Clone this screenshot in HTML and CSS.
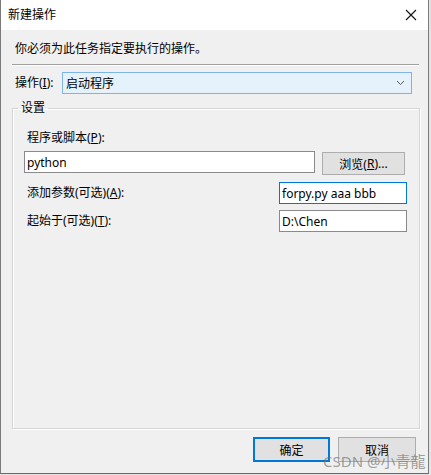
FILE: index.html
```html
<!DOCTYPE html>
<html lang="zh-CN">
<head>
<meta charset="utf-8">
<title>新建操作</title>
<link rel="stylesheet" href="styles.css">
</head>
<body>
<div class="window">
  <div class="titlebar">
    <span class="title">新建操作</span>
    <svg class="close" width="12" height="12" viewBox="0 0 12 12"><path d="M1 1 L11 11 M11 1 L1 11" stroke="#111" stroke-width="1.1" fill="none"/></svg>
  </div>
  <div class="main">
    <div class="prompt">你必须为此任务指定要执行的操作。</div>
    <div class="sep"></div>
    <div class="action-row">
      <span class="action-label">操作(<u>I</u>):</span>
      <div class="combo">
        <span>启动程序</span>
        <svg class="chevron" width="9" height="6" viewBox="0 0 9 6"><path d="M1 1 L4.5 4.5 L8 1" stroke="#555" stroke-width="1" fill="none"/></svg>
      </div>
    </div>
    <fieldset class="group">
      <legend>设置</legend>
      <div class="group-inner">
        <div class="field-label">程序或脚本(<u>P</u>):</div>
        <div class="program-row">
          <div class="input program">python</div>
          <div class="btn browse">浏览(<u>R</u>)...</div>
        </div>
        <div class="opt-row">
          <span class="opt-label">添加参数(可选)(<u>A</u>):</span>
          <div class="input short focused">forpy.py aaa bbb</div>
        </div>
        <div class="opt-row second">
          <span class="opt-label">起始于(可选)(<u>T</u>):</span>
          <div class="input short">D:\Chen</div>
        </div>
      </div>
    </fieldset>
    <div class="footer">
      <div class="btn default">确定</div>
      <div class="btn cancel">取消</div>
    </div>
  </div>
  <div class="watermark">CSDN @小青龍</div>
</div>
</body>
</html>
```

FILE: styles.css
```css
* { box-sizing: border-box; }
html, body { margin: 0; padding: 0; }
body {
  background: #e4e4e4;
  font-family: "Noto Sans", "Noto Sans CJK SC", sans-serif;
  font-size: 12px;
  color: #000;
  width: 431px;
  height: 475px;
  overflow: hidden;
}
.window {
  position: relative;
  width: 429px;
  height: 474px;
  border-left: 1px solid #7a7a7a;
  border-right: 1px solid #7a7a7a;
  border-bottom: 1px solid #6a6a6a;
  background: #f0f0f0;
  display: flex;
  flex-direction: column;
}
.titlebar {
  height: 30px;
  background: #fff;
  display: flex;
  align-items: center;
  justify-content: space-between;
  padding: 0 11px 0 7px;
}
.title { line-height: 16px; }
.close { display: block; }
.main {
  flex: 1;
  display: flex;
  flex-direction: column;
  padding: 11px 8px 0 11px;
}
.prompt { margin-left: 3px; line-height: 16px; }
.sep {
  margin-top: 7px;
  margin-right: 1px;
  height: 2px;
  border-top: 1px solid #a0a0a0;
  border-bottom: 1px solid #fff;
}
.action-row {
  margin-top: 6px;
  display: flex;
  align-items: center;
  height: 22px;
}
.action-label { width: 47px; margin-left: 3px; line-height: 16px; }
.combo {
  flex: 1;
  margin-right: 8px;
  height: 22px;
  background: #e5f1fb;
  border: 1px solid #7eb4ea;
  display: flex;
  align-items: center;
  justify-content: space-between;
  padding: 0 6px 0 3px;
}
.chevron { display: block; }
.group {
  flex: 1;
  margin: 6px 0 0 0;
  padding: 0;
  min-width: 0;
  border: 1px solid #d5d5d5;
  box-shadow: inset 1px 1px 0 #fff, 1px 1px 0 #fff;
}
.group legend {
  margin-left: 5px;
  padding: 0 3px;
  line-height: 16px;
}
.group-inner { padding: 14px 12px 0 11px; }
.field-label { margin-left: 3px; line-height: 16px; }
.program-row {
  margin-top: 5px;
  display: flex;
  align-items: flex-start;
}
.input {
  height: 22px;
  background: #fff;
  border: 1px solid #8a8a8a;
  padding: 0 2px;
  display: flex;
  align-items: center;
  white-space: nowrap;
  overflow: hidden;
}
.input.program { width: 291px; }
.input.short { width: 128px; }
.input.focused { border-color: #0078d7; }
.btn {
  height: 23px;
  background: #e1e1e1;
  border: 1px solid #adadad;
  display: flex;
  align-items: center;
  justify-content: center;
  white-space: nowrap;
}
.browse { width: 83px; margin-left: 7px; margin-top: 1px; }
.opt-row {
  margin-top: 7px;
  display: flex;
  align-items: center;
}
.opt-row.second { margin-top: 6px; }
.opt-label { flex: 1; margin-left: 3px; line-height: 16px; }
.footer {
  height: 44px;
  padding: 8px 4px 0 0;
  display: flex;
  justify-content: flex-end;
  align-items: flex-start;
  gap: 8px;
}
.footer .btn { height: 25px; }
.default { width: 77px; border: 2px solid #0078d7; }
.cancel { width: 78px; }
.watermark {
  position: absolute;
  left: 322px;
  top: 452px;
  font-size: 15px;
  line-height: 18px;
  color: rgba(110, 110, 110, 0.65);
  white-space: nowrap;
}
```
